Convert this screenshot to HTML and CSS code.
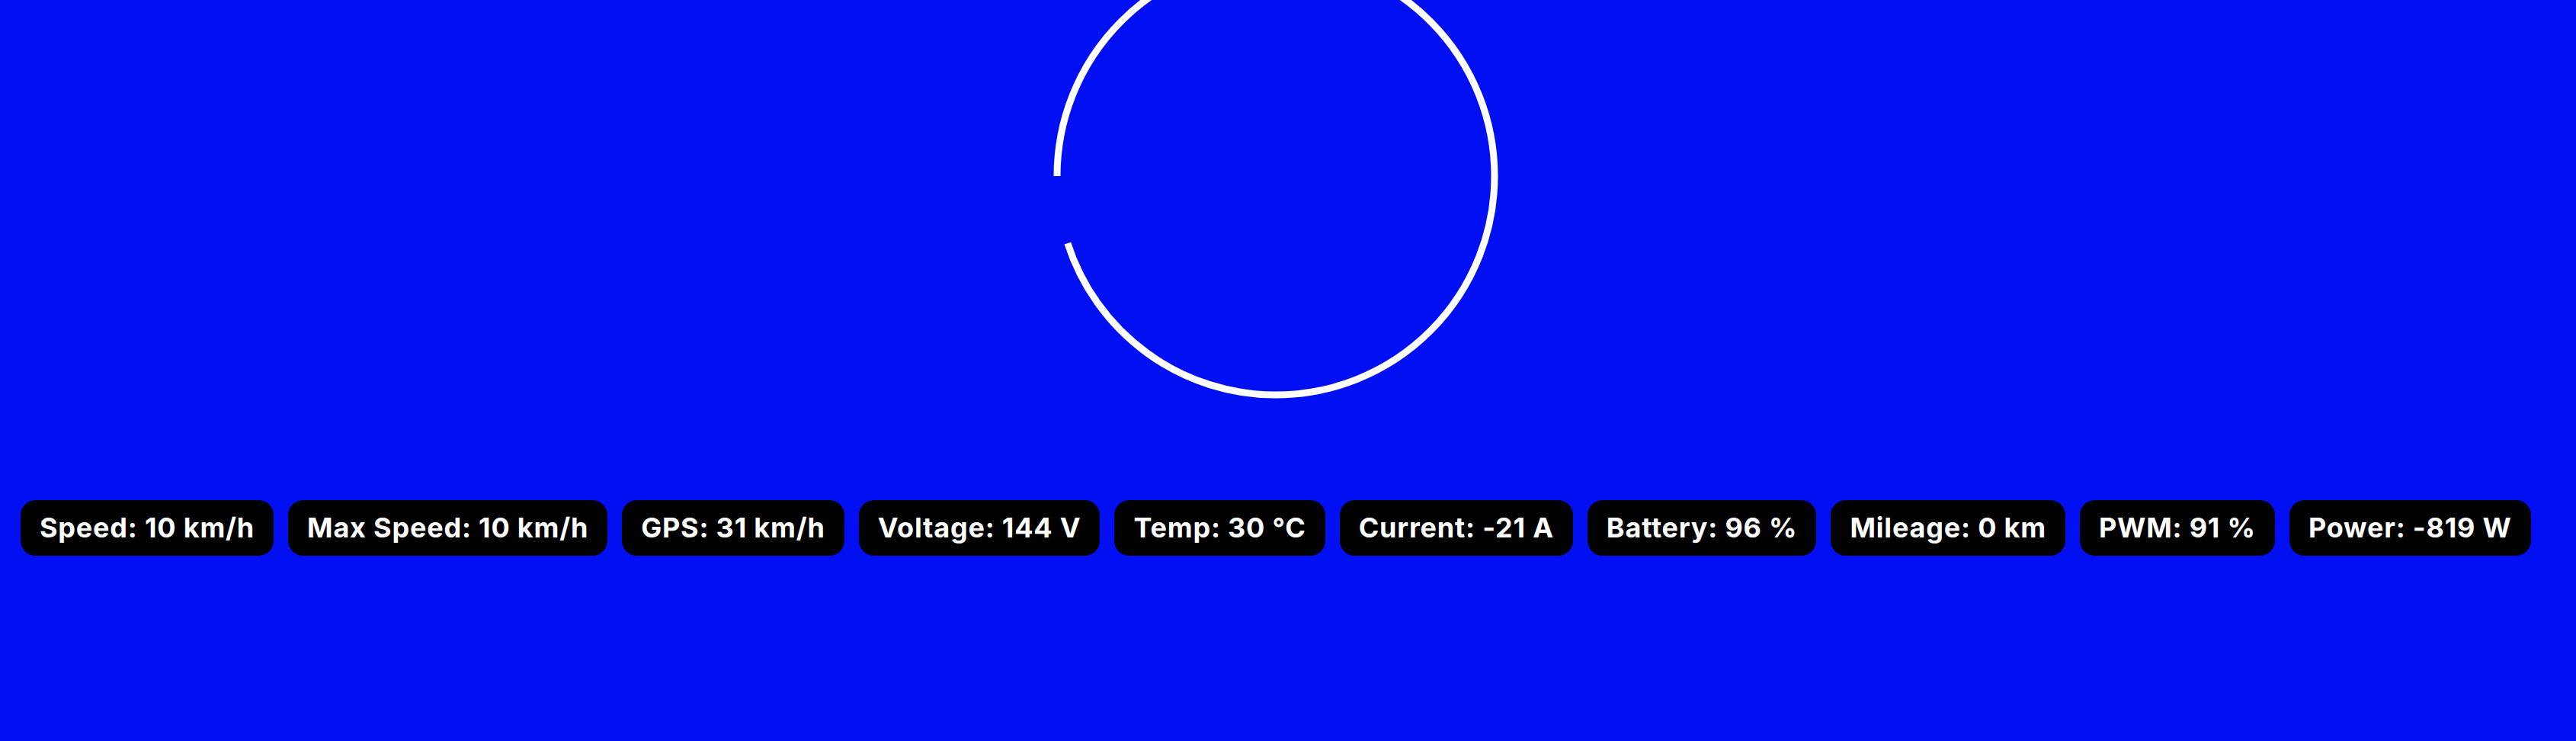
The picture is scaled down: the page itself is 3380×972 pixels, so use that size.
FILE: index.html
```html
<!DOCTYPE html>
<html lang="en">
<head>
<meta charset="utf-8">
<title>Dashboard</title>
<link rel="stylesheet" href="styles.css">
</head>
<body>
<div class="dash">
  <svg class="gauge" width="600" height="531" viewBox="0 69 600 531" xmlns="http://www.w3.org/2000/svg">
    <circle cx="300" cy="300" r="287" fill="none" stroke="#ffffff" stroke-width="9"
      stroke-dasharray="1713 2000" transform="rotate(180 300 300)"/>
  </svg>
  <div class="stats">
    <div class="pill">Speed: 10 km/h</div>
    <div class="pill">Max Speed: 10 km/h</div>
    <div class="pill">GPS: 31 km/h</div>
    <div class="pill">Voltage: 144 V</div>
    <div class="pill">Temp: 30 °C</div>
    <div class="pill">Current: -21 A</div>
    <div class="pill">Battery: 96 %</div>
    <div class="pill">Mileage: 0 km</div>
    <div class="pill">PWM: 91 %</div>
    <div class="pill">Power: -819 W</div>
  </div>
</div>
</body>
</html>
```
FILE: styles.css
```css
html, body {
  margin: 0;
  padding: 0;
  background: #0010f2;
  height: 100%;
}
body {
  font-family: Inter, "Noto Sans", sans-serif;
  overflow: hidden;
}
.dash {
  display: inline-flex;
  flex-direction: column;
  align-items: center;
  padding-left: 27px;
}
.gauge {
  display: block;
}
.stats {
  display: flex;
  gap: 19px;
  margin-top: 125px;
}
.pill {
  background: #000;
  color: #fff;
  font-weight: 700;
  font-size: 36px;
  letter-spacing: 0.8px;
  height: 73px;
  line-height: 73px;
  padding: 0 25px;
  border-radius: 20px;
  white-space: nowrap;
}
```
